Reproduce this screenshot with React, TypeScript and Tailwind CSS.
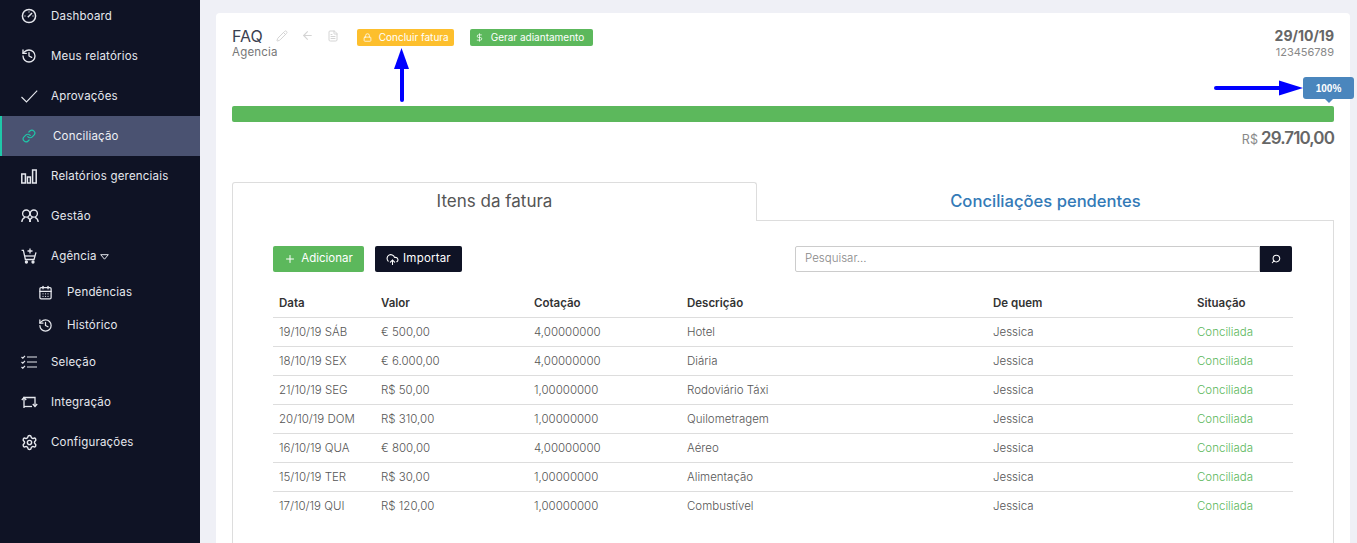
import {
  ArrowLeft,
  CalendarDays,
  CloudUpload,
  DollarSign,
  FileText,
  History,
  Link,
  Lock,
  Pencil,
  Plus,
  Search,
  Settings,
} from "lucide-react";

const font = "font-['Inter','Noto_Sans',sans-serif]";

const rows = [
  ["19/10/19 SÁB", "€ 500,00", "4,00000000", "Hotel"],
  ["18/10/19 SEX", "€ 6.000,00", "4,00000000", "Diária"],
  ["21/10/19 SEG", "R$ 50,00", "1,00000000", "Rodoviário Táxi"],
  ["20/10/19 DOM", "R$ 310,00", "1,00000000", "Quilometragem"],
  ["16/10/19 QUA", "€ 800,00", "4,00000000", "Aéreo"],
  ["15/10/19 TER", "R$ 30,00", "1,00000000", "Alimentação"],
  ["17/10/19 QUI", "R$ 120,00", "1,00000000", "Combustível"],
];

function DashIcon() {
  return (
    <svg width="16" height="16" viewBox="0 0 16 16" fill="none" stroke="currentColor" strokeWidth="1.5">
      <circle cx="8" cy="8" r="6.6" />
      <path d="M6.8 9.2L11 5" />
      <path d="M8 3.4V4.6M3.4 8H4.6M12.6 8H11.4" strokeWidth="1" />
    </svg>
  );
}

function CheckIcon() {
  return (
    <svg width="17" height="13" viewBox="0 0 17 13" fill="none" stroke="currentColor" strokeWidth="1.1">
      <path d="M0.5 7L5.5 12L16.2 0.6" />
    </svg>
  );
}

function BarsIcon() {
  return (
    <svg width="16" height="15" viewBox="0 0 16 15" fill="none" stroke="currentColor" strokeWidth="1.5">
      <rect x="0.8" y="5" width="3.6" height="9" />
      <rect x="6.4" y="8" width="3" height="6" />
      <rect x="11.6" y="1" width="3.6" height="13" />
    </svg>
  );
}

function GroupIcon() {
  return (
    <svg width="18" height="14" viewBox="0 0 18 14" fill="none" stroke="currentColor" strokeWidth="1.3">
      <circle cx="5.2" cy="4.6" r="3.6" />
      <circle cx="12.8" cy="4.6" r="3.6" />
      <path d="M0.8 13C1 10.4 2.4 9 4 8.4M9.4 13C9.2 10.4 7.9 9 6.4 8.4" />
      <path d="M8.6 13C8.8 10.4 10.1 9 11.6 8.4M17.2 13C17 10.4 15.6 9 14 8.4" />
    </svg>
  );
}

function BasketIcon() {
  return (
    <svg width="16" height="16" viewBox="0 0 16 16" fill="none" stroke="currentColor" strokeWidth="1.3">
      <path d="M0.6 2.4H2.4L4.4 11.5H13L15 4.4" />
      <path d="M4 8H13.8" />
      <path d="M9 0.5V5.5M6.5 3H11.5" />
      <circle cx="5.4" cy="14" r="1" fill="currentColor" />
      <circle cx="12" cy="14" r="1" fill="currentColor" />
    </svg>
  );
}

function SelectionIcon() {
  return (
    <svg width="16" height="14" viewBox="0 0 16 14" fill="none" stroke="currentColor" strokeWidth="1.2">
      <path d="M6 2H16M6 7H16M6 12H16" />
      <path d="M0.5 2L1.8 3.2L4 0.8M0.5 7L1.8 8.2L4 5.8M0.5 12L1.8 13.2L4 10.8" />
    </svg>
  );
}

function SyncIcon() {
  return (
    <svg width="18" height="14" viewBox="0 0 18 14" fill="none" stroke="currentColor" strokeWidth="1.3">
      <path d="M3 13V2.5H14V11" />
      <path d="M0.8 5L3 2.5L5.2 5" />
      <path d="M11.8 9L14 11.5L16.2 9" />
      <path d="M3 11.5H11" />
    </svg>
  );
}

function NavItem({ icon, label, active, caret }: { icon: React.ReactNode; label: string; active?: boolean; caret?: boolean }) {
  return (
    <div
      className={
        active
          ? "h-10 flex items-center bg-[#4a5271] border-l-2 border-[#1fc8a9] pl-[20px] text-[#eef0f5]"
          : "h-10 flex items-center pl-[21px] text-[#e6e8ee]"
      }
    >
      <span className={active ? "w-[31px] flex items-center text-[#1fc8a9]" : "w-[30px] flex items-center"}>{icon}</span>
      <span className="text-[11.5px] tracking-[0.2px] pt-[2px]">{label}</span>
      {caret && (
        <svg className="ml-[3px] mt-[1px]" width="9" height="6" viewBox="0 0 9 6" fill="none" stroke="currentColor">
          <path d="M0.7 0.7H8.3L4.5 5.2Z" />
        </svg>
      )}
    </div>
  );
}

function SubItem({ icon, label }: { icon: React.ReactNode; label: string }) {
  return (
    <div className="h-[33px] flex items-center pl-[38px] text-[#e6e8ee]">
      <span className="w-[29px] flex items-center">{icon}</span>
      <span className="text-[11.5px] tracking-[0.2px]">{label}</span>
    </div>
  );
}

export default function App() {
  return (
    <div className={`${font} h-[543px] overflow-hidden flex bg-[#eff0f6]`}>
      {/* Sidebar */}
      <aside className="w-[200px] shrink-0 bg-[#0f1325]">
        <div className="-mt-[4px]">
          <NavItem icon={<DashIcon />} label="Dashboard" />
          <NavItem icon={<History size={16} />} label="Meus relatórios" />
          <NavItem icon={<CheckIcon />} label="Aprovações" />
          <NavItem active icon={<Link size={14} />} label="Conciliação" />
          <NavItem icon={<BarsIcon />} label="Relatórios gerenciais" />
          <NavItem icon={<GroupIcon />} label="Gestão" />
          <NavItem caret icon={<BasketIcon />} label="Agência" />
          <div>
            <SubItem icon={<CalendarDays size={15} />} label="Pendências" />
            <SubItem icon={<History size={15} />} label="Histórico" />
          </div>
          <NavItem icon={<SelectionIcon />} label="Seleção" />
          <NavItem icon={<SyncIcon />} label="Integração" />
          <NavItem icon={<Settings size={17} />} label="Configurações" />
        </div>
      </aside>

      {/* Main card */}
      <main className="ml-4 mt-[13px] mr-[7px] flex-1 bg-white rounded-t-sm px-4 pt-[14px] relative text-[#555]">
        <div className="flex items-start justify-between h-[42px]">
          <div className="flex items-start">
            <div>
              <div className="text-[16px] leading-[18px] text-[#3a4150]">FAQ</div>
              <div className="text-[11.5px] leading-[14px] text-[#777] tracking-[0.2px]">Agencia</div>
            </div>
            <div className="flex items-center gap-[13px] -ml-[2px] mt-[2px] text-[#d4d4d4]">
              <Pencil size={12} />
              <ArrowLeft size={13} />
              <FileText size={12} />
            </div>
            <button className="ml-[18px] mt-[2px] h-[17px] w-[97px] rounded-[2px] bg-[#fdbf2d] flex items-center pl-[6px] text-white text-[10px]">
              <Lock size={9} className="mr-[7px]" />
              Concluir fatura
            </button>
            <button className="ml-4 mt-[2px] h-[17px] w-[123px] rounded-[2px] bg-[#5cb85c] flex items-center pl-[5px] text-white text-[10px]">
              <DollarSign size={9} className="mr-[7px]" />
              Gerar adiantamento
            </button>
          </div>
          <div className="text-right">
            <div className="text-[14px] leading-[18px] font-bold text-[#666]">29/10/19</div>
            <div className="text-[11px] leading-[14px] text-[#888]">123456789</div>
          </div>
        </div>

        <div className="mt-[37px] h-4 rounded-[2px] bg-[#5cb85c]" />
        <div className="mt-[4px] h-5 flex items-baseline justify-end">
          <span className="text-[12.5px] mr-[3px] text-[#888]">R$</span>
          <span className="text-[17px] font-semibold text-[#666] tracking-[-0.9px]">29.710,00</span>
        </div>

        {/* Progress tooltip */}
        <div className="absolute left-[1087px] top-[64px] w-[51px] h-[22px] rounded-[3px] bg-[#4a86bd] flex items-center justify-center text-white text-[10px] font-bold font-['Liberation_Sans',sans-serif]">
          100%
          <span className="absolute left-[22px] -bottom-[4px] w-0 h-0 border-x-[4px] border-x-transparent border-t-[4px] border-t-[#4a86bd]" />
        </div>

        {/* Annotation arrows */}
        <svg className="absolute left-[176px] top-[32px]" width="20" height="60" viewBox="0 0 20 60">
          <path d="M9.5 3L17 24H2Z" fill="#0000ff" />
          <rect x="8" y="22" width="4" height="35" rx="2" fill="#0000ff" />
        </svg>
        <svg className="absolute left-[997px] top-[64px]" width="92" height="22" viewBox="0 0 92 22">
          <path d="M90 11L66 3.5V18.5Z" fill="#0000ff" />
          <rect x="1" y="9" width="68" height="4" rx="2" fill="#0000ff" />
        </svg>

        {/* Tabs */}
        <div className="mt-[36px] flex h-[39px]">
          <div className="w-[525px] border border-b-0 border-[#ddd] rounded-t-[3px] flex items-center justify-center text-[17px] text-[#555]">
            Itens da fatura
          </div>
          <div className="flex-1 border-b border-[#ddd] flex items-center justify-center text-[16.6px] font-medium text-[#337ab7]">
            Conciliações pendentes
          </div>
        </div>

        <div className="border-x border-[#ddd] px-10 pt-[25px] h-[400px]">
          <div className="flex items-center justify-between">
            <div className="flex gap-[11px]">
              <button className="w-[91px] h-[26px] rounded-[2px] bg-[#5cb85c] flex items-center justify-center text-white text-[11.5px]">
                <Plus size={12} className="mr-[5px]" />
                Adicionar
              </button>
              <button className="w-[87px] h-[26px] rounded-[2px] bg-[#0f1325] flex items-center justify-center text-white text-[11.5px] tracking-[0.2px]">
                <CloudUpload size={13} className="mr-[4px]" />
                Importar
              </button>
            </div>
            <div className="flex w-[497px] h-[26px] mr-px">
              <div className="flex-1 border border-[#ccc] rounded-l-[2px] pl-[9px] flex items-center text-[11.5px] font-light text-[#888]">
                Pesquisar...
              </div>
              <div className="w-8 bg-[#0f1325] rounded-r-[2px] flex items-center justify-center text-white">
                <Search size={10} className="-scale-x-100" strokeWidth={2.5} />
              </div>
            </div>
          </div>

          <table className="mt-4 w-[1020px] table-fixed text-[11.5px] text-left">
            <colgroup>
              <col className="w-[102px]" />
              <col className="w-[153px]" />
              <col className="w-[153px]" />
              <col className="w-[306px]" />
              <col className="w-[204px]" />
              <col />
            </colgroup>
            <thead>
              <tr className="h-[29px] border-b border-[#ddd] text-[#333]">
                {["Data", "Valor", "Cotação", "Descrição", "De quem", "Situação"].map((h) => (
                  <th key={h} className="px-[6px] pt-[2px] font-semibold">
                    {h}
                  </th>
                ))}
              </tr>
            </thead>
            <tbody>
              {rows.map((r) => (
                <tr key={r[0]} className="h-[29px] border-b border-[#ddd] last:border-b-0 text-[#555] font-light">
                  {r.map((c) => (
                    <td key={c} className="px-[6px] pt-[2px]">
                      {c}
                    </td>
                  ))}
                  <td className="px-[6px] pt-[2px]">Jessica</td>
                  <td className="px-[6px] pt-[2px] text-[#5cb85c]">Conciliada</td>
                </tr>
              ))}
            </tbody>
          </table>
        </div>
      </main>
    </div>
  );
}
